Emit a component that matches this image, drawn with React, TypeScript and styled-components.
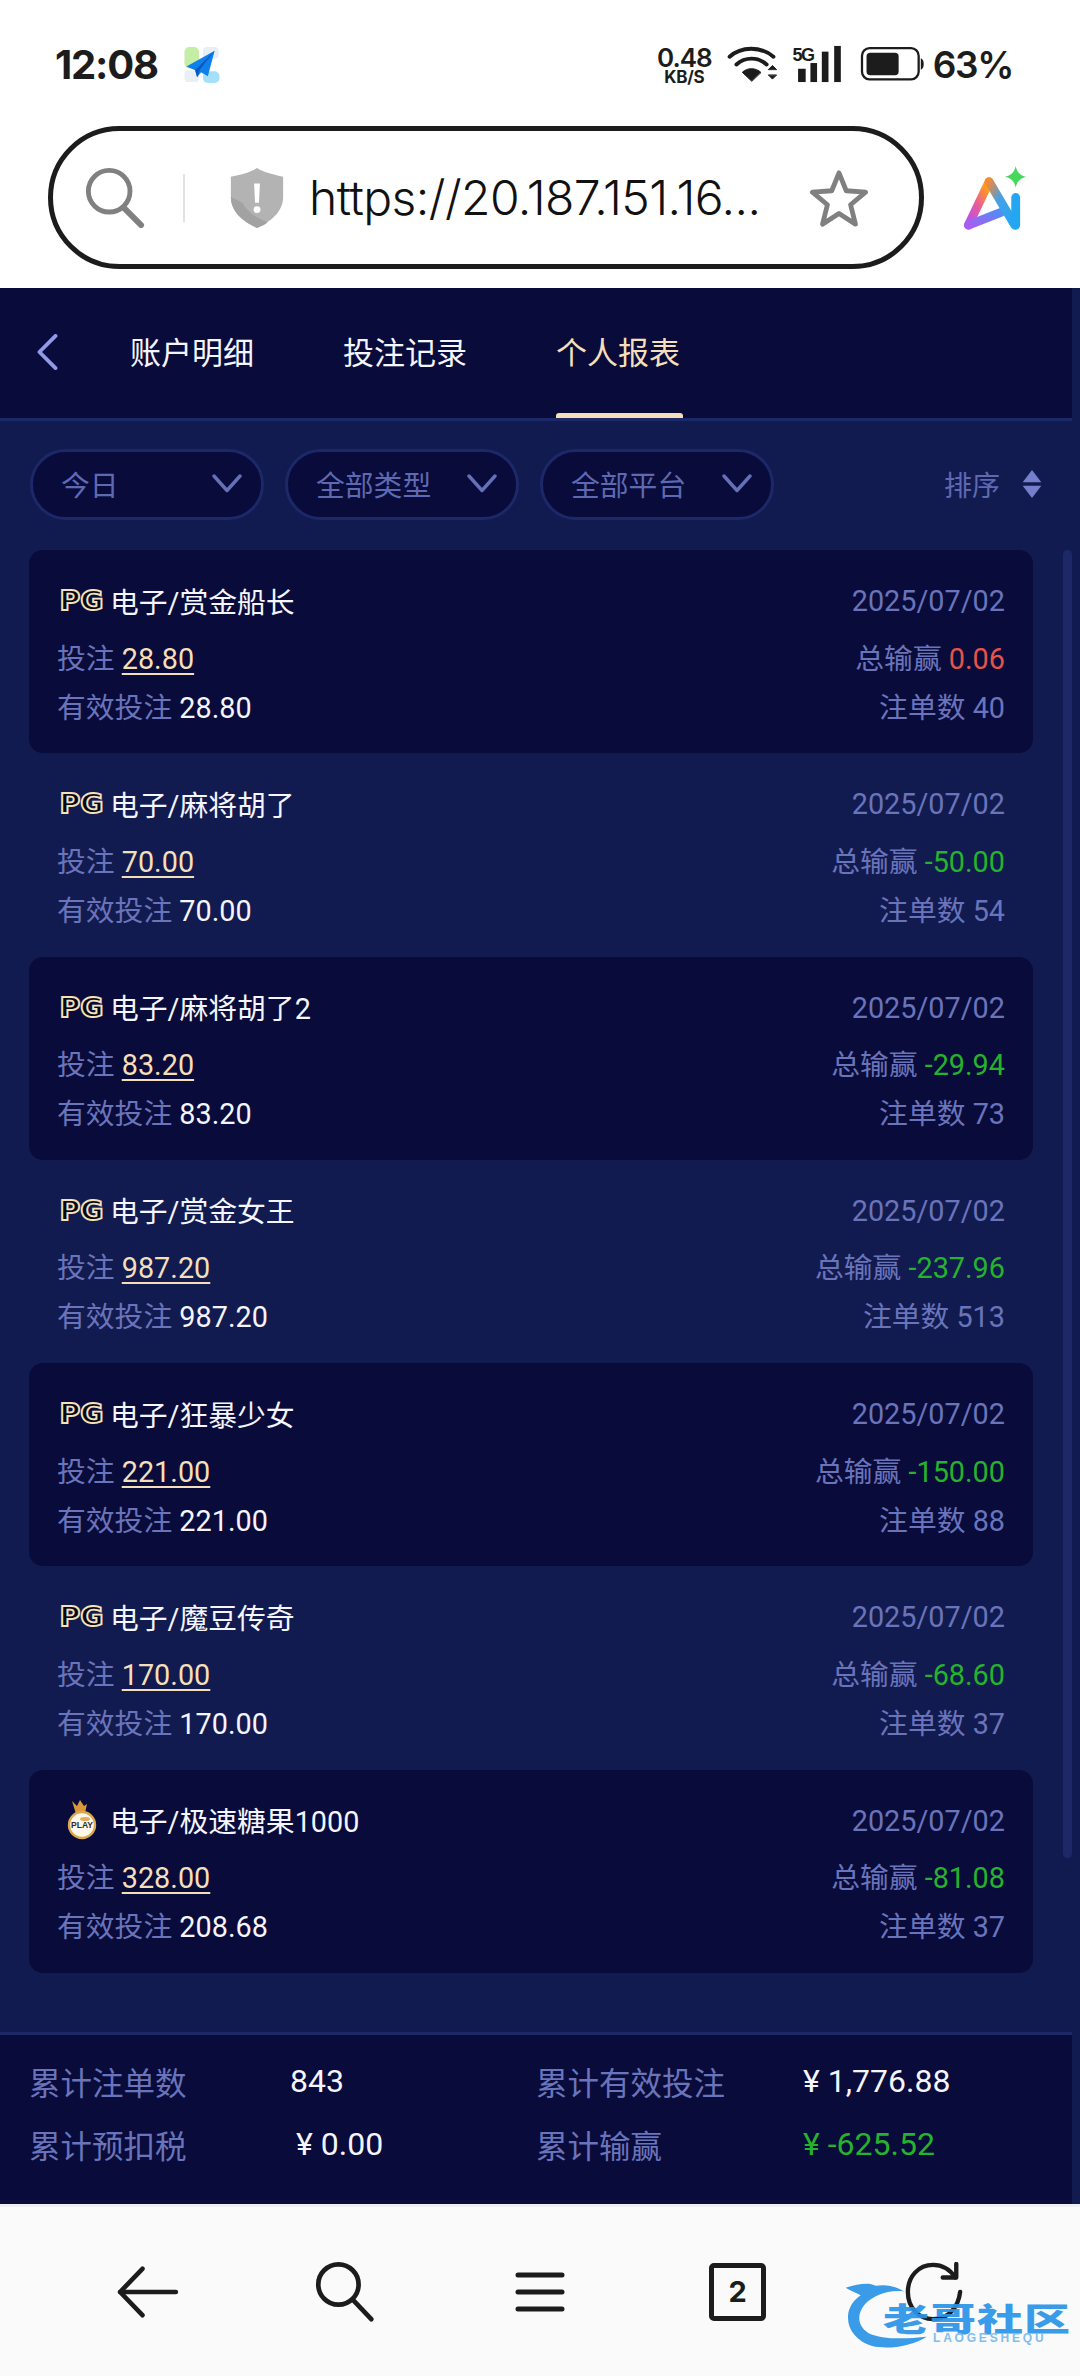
import styled, { createGlobalStyle } from "styled-components";

const GlobalStyle = createGlobalStyle`
  html, body {
    margin: 0;
    padding: 0;
    background: #fafafa;
  }
  * {
    box-sizing: border-box;
  }
`;

const Page = styled.div`
  width: 1080px;
  height: 2376px;
  display: flex;
  flex-direction: column;
  position: relative;
  overflow: hidden;
  background: #fff;
  font-family: Roboto, "Noto Sans CJK SC", sans-serif;
`;

const StatusBar = styled.div`
  height: 126px;
  display: flex;
  align-items: center;
  justify-content: space-between;
  padding: 2px 67px 0 55px;
  color: #1c1c1c;
  font-family: Inter, "Liberation Sans", sans-serif;
`;

const StatusLeft = styled.div`
  display: flex;
  align-items: center;
  gap: 25px;
`;

const Clock = styled.span`
  font-size: 40px;
  font-weight: 700;
  letter-spacing: -1.2px;
`;

const StatusRight = styled.div`
  display: flex;
  align-items: center;
  gap: 13px;
`;

const Speed = styled.div`
  width: 59px;
  display: flex;
  flex-direction: column;
  align-items: center;
  font-weight: 600;
  line-height: 1;
`;

const SpeedValue = styled.span`
  font-size: 26px;
  letter-spacing: -1px;
  height: 24px;
`;

const SpeedUnit = styled.span`
  font-size: 17px;
  font-weight: 700;
  letter-spacing: -0.2px;
  height: 15px;
`;

const BatteryGroup = styled.div`
  display: flex;
  align-items: center;
  gap: 7px;
`;

const Percent = styled.span`
  font-size: 37px;
  font-weight: 600;
  letter-spacing: -1.4px;
`;

const UrlRow = styled.div`
  height: 162px;
  display: flex;
  align-items: flex-start;
  padding-left: 48px;
`;

const UrlPill = styled.div`
  width: 876px;
  height: 143px;
  border: 5px solid #1c1c1c;
  border-radius: 72px;
  display: flex;
  align-items: center;
  padding: 0 49px 0 32px;
`;

const UrlDivider = styled.div`
  width: 2px;
  height: 48px;
  margin: 0 45px 0 38px;
  background: #e2e2e2;
`;

const UrlText = styled.span`
  margin-left: 25px;
  font-family: Inter, "Liberation Sans", sans-serif;
  font-size: 48px;
  font-weight: 300;
  letter-spacing: -0.55px;
  color: #111;
  white-space: nowrap;
`;

const StarSlot = styled.div`
  margin-left: auto;
  display: flex;
`;

const AiSlot = styled.div`
  margin: 40px 0 0 38px;
  display: flex;
`;

const Screen = styled.div`
  flex: 1;
  display: flex;
  flex-direction: column;
  background: #121b50;
  position: relative;
`;

const NavBar = styled.div`
  width: 1072px;
  height: 133px;
  display: flex;
  align-items: stretch;
  padding-left: 36px;
  background: #090b3a;
  border-bottom: 3px solid #1c2868;
`;

const BackSlot = styled.div`
  width: 94px;
  display: flex;
  align-items: center;
  padding-bottom: 2px;
`;

const Tabs = styled.div`
  display: flex;
  gap: 88px;
`;

const Tab = styled.div<{ $active?: boolean }>`
  position: relative;
  width: 125px;
  display: flex;
  align-items: center;
  font-size: 31px;
  white-space: nowrap;
  padding-bottom: 5px;
  color: ${p => (p.$active ? "#f5dfb8" : "#f4f5ff")};

  ${p =>
    p.$active &&
    `
    &::after {
      content: "";
      position: absolute;
      left: 0;
      bottom: 0;
      width: 127px;
      height: 5px;
      border-radius: 3px 3px 0 0;
      background: #f5dfb8;
    }
  `}
`;

const FilterBar = styled.div`
  width: 1072px;
  display: flex;
  align-items: center;
  gap: 21px;
  padding: 28px 30px 0;
`;

const Filter = styled.div`
  width: 234px;
  height: 71px;
  display: flex;
  align-items: center;
  justify-content: space-between;
  padding: 0 19px 3px 28px;
  background: #090b3a;
  border: 3px solid #1c2868;
  border-radius: 36px;
  color: #5f69b2;
  font-size: 28.8px;
`;

const Sort = styled.div`
  margin-left: auto;
  display: flex;
  align-items: center;
  gap: 22px;
  color: #5f69b2;
  font-size: 28px;
  padding-bottom: 1px;
`;

const ScrollThumb = styled.div`
  position: absolute;
  top: 262px;
  right: 8px;
  width: 9px;
  height: 1308px;
  border-radius: 5px;
  background: #1c2868;
`;

const List = styled.div`
  display: grid;
  grid-auto-rows: 203.3px;
  width: 1004px;
  margin: 30px 0 0 29px;
`;

const Card = styled.div<{ $dark: boolean }>`
  display: flex;
  flex-direction: column;
  padding: 30px 28px 0 28px;
  border-radius: 14px;
  background: ${p => (p.$dark ? "#090b3a" : "transparent")};
  font-size: 28.8px;
`;

const CardRow = styled.div<{ $gap?: number }>`
  height: 40px;
  margin-top: ${p => p.$gap ?? 0}px;
  display: flex;
  align-items: center;
  justify-content: space-between;
  white-space: nowrap;
`;

const Title = styled.div`
  display: flex;
  align-items: center;
  color: #f4f5ff;
`;

const LogoSlot = styled.div`
  width: 53px;
  display: flex;
  justify-content: center;
  padding-right: 4px;
`;

const Label = styled.span`
  color: #6a74ba;
`;

const DateText = styled.span`
  padding-top: 2px;
  color: #6a74ba;
`;

const Value = styled.span<{ $tone?: "white" | "gold" | "green" | "red" | "muted" }>`
  color: ${p =>
    ({ white: "#f4f5ff", gold: "#f5dfb8", green: "#25b32c", red: "#e5534b", muted: "#6a74ba" })[p.$tone ?? "white"]};
  ${p =>
    p.$tone === "gold" &&
    "text-decoration: underline; text-decoration-thickness: 2px; text-underline-offset: 4px;"}
`;

const Footer = styled.div`
  width: 1072px;
  height: 172px;
  margin-top: auto;
  display: grid;
  grid-template-columns: 261px 246px 267px 1fr;
  grid-auto-rows: 63px;
  align-items: center;
  align-content: start;
  padding: 14px 0 0 29px;
  background: #090b3a;
  border-top: 3px solid #1c2868;
  font-size: 32px;
`;

const FooterLabel = styled.span`
  font-size: 31.5px;
  color: #6a74ba;
  white-space: nowrap;
`;

const FooterValue = styled.span<{ $green?: boolean; $inset?: number }>`
  color: ${p => (p.$green ? "#25b32c" : "#f4f5ff")};
  padding-left: ${p => p.$inset ?? 0}px;
  white-space: nowrap;
`;

const Toolbar = styled.div`
  height: 172px;
  display: grid;
  grid-template-columns: repeat(5, 196.5px);
  align-items: center;
  justify-items: center;
  padding-left: 50px;
  background: #fafafa;
  border-top: 3px solid #eeeef6;
  position: relative;
`;

const TabCount = styled.div`
  width: 57px;
  height: 58px;
  display: flex;
  align-items: center;
  justify-content: center;
  border: 5px solid #1c1c1c;
  border-radius: 5px;
  color: #1c1c1c;
  font-size: 29px;
  font-weight: 700;
  font-family: Inter, "Liberation Sans", sans-serif;
`;

const Watermark = styled.div`
  position: absolute;
  right: 17px;
  bottom: 28px;
  width: 220px;
  height: 66px;
  opacity: 0.92;
`;

const WatermarkName = styled.span`
  position: absolute;
  left: 40px;
  top: 15px;
  font-family: "Noto Sans CJK SC", sans-serif;
  font-size: 46px;
  font-weight: 900;
  line-height: 40px;
  letter-spacing: 1px;
  color: #2a94e8;
  white-space: nowrap;
  transform: scaleY(0.7);
`;

const WatermarkLatin = styled.span`
  position: absolute;
  left: 90px;
  top: 49px;
  font-family: "Liberation Sans", sans-serif;
  font-size: 12px;
  line-height: 14px;
  letter-spacing: 2.8px;
  font-weight: 700;
  color: #77b9ee;
  white-space: nowrap;
`;

const PgLogo = () => (
  <svg width="47" height="38" viewBox="0 0 47 38">
    <text
      x="23.5"
      y="29"
      textAnchor="middle"
      textLength="44"
      lengthAdjust="spacingAndGlyphs"
      fontFamily="'DejaVu Sans', sans-serif"
      fontWeight="700"
      fontSize="27"
      fill="#07070f"
      stroke="#f5e2bd"
      strokeWidth="1.8"
    >
      PG
    </text>
  </svg>
);

const PlayLogo = () => (
  <svg width="30" height="40" viewBox="0 0 30 40">
    <path d="M5 1 L10 6 L13 0 L17 6 L20 4 L18 13 L9 14 Z" fill="#d9983a" />
    <circle cx="15" cy="25" r="13" fill="#fff8ea" stroke="#dba74f" strokeWidth="2.4" />
    <ellipse cx="18" cy="19" rx="5" ry="2" fill="#e0ad5e" />
    <text x="15" y="28" textAnchor="middle" fontFamily="'Liberation Sans', sans-serif" fontWeight="700" fontSize="8.5" fill="#2b2b2b">
      PLAY
    </text>
  </svg>
);

const Chevron = () => (
  <svg width="30" height="19" viewBox="0 0 30 19" fill="none">
    <path d="M2 2 L15 16.5 L28 2" stroke="#6670b8" strokeWidth="3.4" strokeLinecap="round" strokeLinejoin="round" />
  </svg>
);

type Row = {
  logo: "pg" | "play";
  title: string;
  bet: string;
  valid: string;
  profit: string;
  orders: number;
};

const rows: Row[] = [
  { logo: "pg", title: "电子/赏金船长", bet: "28.80", valid: "28.80", profit: "0.06", orders: 40 },
  { logo: "pg", title: "电子/麻将胡了", bet: "70.00", valid: "70.00", profit: "-50.00", orders: 54 },
  { logo: "pg", title: "电子/麻将胡了2", bet: "83.20", valid: "83.20", profit: "-29.94", orders: 73 },
  { logo: "pg", title: "电子/赏金女王", bet: "987.20", valid: "987.20", profit: "-237.96", orders: 513 },
  { logo: "pg", title: "电子/狂暴少女", bet: "221.00", valid: "221.00", profit: "-150.00", orders: 88 },
  { logo: "pg", title: "电子/魔豆传奇", bet: "170.00", valid: "170.00", profit: "-68.60", orders: 37 },
  { logo: "play", title: "电子/极速糖果1000", bet: "328.00", valid: "208.68", profit: "-81.08", orders: 37 },
];

export default function App() {
  return (
    <Page>
      <GlobalStyle />

      <StatusBar>
        <StatusLeft>
          <Clock>12:08</Clock>
          <svg width="38" height="37" viewBox="0 0 38 38">
            <rect x="1" y="1" width="15" height="22" rx="5" fill="#c4eda6" />
            <rect x="1" y="25" width="15" height="12" rx="4" fill="#e9eff4" />
            <rect x="20" y="1" width="16" height="12" rx="4" fill="#e6eff5" />
            <rect x="20" y="26" width="17" height="12" rx="5" fill="#a5e0fa" />
            <path d="M32 5 L3 21 L12 25 L14 32 L18 27 L25 31 Z" fill="#0f7fea" />
            <path d="M32 5 L12 25 L14 32 L17 24 Z" fill="#0a56c4" />
          </svg>
        </StatusLeft>
        <StatusRight>
          <Speed>
            <SpeedValue>0.48</SpeedValue>
            <SpeedUnit>KB/S</SpeedUnit>
          </Speed>
          <svg width="51" height="37" viewBox="0 0 51 38" fill="none" stroke="#1c1c1c" strokeWidth="4" strokeLinecap="round">
            <path d="M2 11 C14 0 34 0 47 11" />
            <path d="M9 19 C18 11 31 11 40 19" />
            <path d="M24.5 36 L15 27 C20 22 29 22 34 27 Z" fill="#1c1c1c" strokeWidth="1" strokeLinejoin="round" />
            <path d="M42 24 L46 20 L50 24 Z M42 30 L46 34 L50 30 Z" fill="#1c1c1c" strokeWidth="1" />
          </svg>
          <svg width="55" height="38" viewBox="0 0 55 40">
            <text x="0" y="17" fontFamily="'Liberation Sans Narrow', 'Liberation Sans', sans-serif" fontWeight="700" fontSize="19" letterSpacing="-1.5" fill="#1c1c1c">
              5G
            </text>
            <rect x="6" y="25" width="8" height="14" fill="#1c1c1c" />
            <rect x="19" y="19" width="7" height="20" fill="#1c1c1c" />
            <rect x="31" y="7" width="7" height="32" fill="#1c1c1c" />
            <rect x="44" y="1" width="7" height="38" fill="#1c1c1c" />
          </svg>
          <BatteryGroup>
            <svg width="67" height="34" viewBox="0 0 67 36">
              <rect x="1.2" y="1.2" width="60" height="33" rx="8" fill="none" stroke="#1c1c1c" strokeWidth="2.4" />
              <rect x="6" y="6" width="34" height="24" rx="4" fill="#1c1c1c" />
              <path d="M63.5 12 C66 13 66.5 15 66.5 18 C66.5 21 66 23 63.5 24 Z" fill="#1c1c1c" />
            </svg>
            <Percent>63%</Percent>
          </BatteryGroup>
        </StatusRight>
      </StatusBar>

      <UrlRow>
        <UrlPill>
          <svg width="60" height="60" viewBox="0 0 60 62" fill="none" stroke="#808080" strokeWidth="5" strokeLinecap="round">
            <circle cx="24" cy="24" r="21.5" />
            <path d="M39 41 L57 59" strokeWidth="6" />
          </svg>
          <UrlDivider />
          <svg width="54" height="60" viewBox="0 0 54 62">
            <path d="M27 0 C33 4 44 7 54 9 L54 30 C54 46 40 56 27 62 C14 56 0 46 0 30 L0 9 C10 7 21 4 27 0 Z" fill="#b3b3b3" />
            <path d="M0 30 C0 46 14 56 27 62 C32 60 36 58 38 56 C26 52 16 44 12 36 Z" fill="#a2a2a2" />
            <path d="M24 16 L30 16 L29 36 L25 36 Z" fill="#fff" />
            <circle cx="27" cy="43" r="3.6" fill="#fff" />
          </svg>
          <UrlText>https://20.187.151.16...</UrlText>
          <StarSlot>
            <svg width="62" height="58" viewBox="0 0 62 60" fill="none">
              <path
                d="M31 4 L38.5 22.5 L58.5 24 L43 37 L48 57 L31 46 L14 57 L19 37 L3.5 24 L23.5 22.5 Z"
                stroke="#808080"
                strokeWidth="5"
                strokeLinejoin="round"
              />
            </svg>
          </StarSlot>
        </UrlPill>
        <AiSlot>
          <svg width="68" height="65" viewBox="1 0 64 66" fill="none">
            <defs>
              <linearGradient id="aiLeft" x1="0" y1="1" x2="0.6" y2="0">
                <stop offset="0" stopColor="#b74df0" />
                <stop offset="0.55" stopColor="#e85c9a" />
                <stop offset="1" stopColor="#ff9a1f" />
              </linearGradient>
              <linearGradient id="aiCross" x1="0" y1="1" x2="1" y2="0">
                <stop offset="0" stopColor="#a95cf2" />
                <stop offset="1" stopColor="#4f8df5" />
              </linearGradient>
              <linearGradient id="aiRight" x1="0" y1="0" x2="1" y2="1">
                <stop offset="0" stopColor="#f08a3a" />
                <stop offset="0.4" stopColor="#46a0e8" />
                <stop offset="1" stopColor="#1fa8f5" />
              </linearGradient>
            </defs>
            <path d="M5 60 L26 16" stroke="url(#aiLeft)" strokeWidth="9" strokeLinecap="round" />
            <path d="M5 60 L38 47" stroke="url(#aiCross)" strokeWidth="9" strokeLinecap="round" />
            <path d="M26 16 L52 60" stroke="url(#aiRight)" strokeWidth="9" strokeLinecap="round" />
            <path d="M53 32 L53 60" stroke="#24a6f2" strokeWidth="9" strokeLinecap="round" />
            <path d="M53 0 C54 6 58 10 64 11 C58 12 54 16 53 22 C52 16 48 12 42 11 C48 10 52 6 53 0 Z" fill="#46d85c" />
          </svg>
        </AiSlot>
      </UrlRow>

      <Screen>
        <NavBar>
          <BackSlot>
            <svg width="22" height="36" viewBox="0 0 22 38" fill="none">
              <path d="M20 2 L3 19 L20 36" stroke="#8f9bea" strokeWidth="4" strokeLinecap="round" strokeLinejoin="round" />
            </svg>
          </BackSlot>
          <Tabs>
            <Tab>账户明细</Tab>
            <Tab>投注记录</Tab>
            <Tab $active>个人报表</Tab>
          </Tabs>
        </NavBar>

        <FilterBar>
          <Filter>
            今日
            <Chevron />
          </Filter>
          <Filter>
            全部类型
            <Chevron />
          </Filter>
          <Filter>
            全部平台
            <Chevron />
          </Filter>
          <Sort>
            排序
            <svg width="20" height="28" viewBox="0 0 20 30">
              <path d="M10 0 L20 13 L0 13 Z M0 17 L20 17 L10 30 Z" fill="#7480cc" />
            </svg>
          </Sort>
        </FilterBar>

        <List>
          {rows.map((row, i) => (
            <Card key={row.title} $dark={i % 2 === 0}>
              <CardRow>
                <Title>
                  <LogoSlot>{row.logo === "pg" ? <PgLogo /> : <PlayLogo />}</LogoSlot>
                  {row.title}
                </Title>
                <DateText>2025/07/02</DateText>
              </CardRow>
              <CardRow $gap={16}>
                <span>
                  <Label>投注 </Label>
                  <Value $tone="gold">{row.bet}</Value>
                </span>
                <span>
                  <Label>总输赢 </Label>
                  <Value $tone={row.profit.startsWith("-") ? "green" : "red"}>{row.profit}</Value>
                </span>
              </CardRow>
              <CardRow $gap={9}>
                <span>
                  <Label>有效投注 </Label>
                  <Value>{row.valid}</Value>
                </span>
                <span>
                  <Label>注单数 </Label>
                  <Value $tone="muted">{row.orders}</Value>
                </span>
              </CardRow>
            </Card>
          ))}
        </List>

        <ScrollThumb />

        <Footer>
          <FooterLabel>累计注单数</FooterLabel>
          <FooterValue>843</FooterValue>
          <FooterLabel>累计有效投注</FooterLabel>
          <FooterValue>¥ 1,776.88</FooterValue>
          <FooterLabel>累计预扣税</FooterLabel>
          <FooterValue $inset={6}>¥ 0.00</FooterValue>
          <FooterLabel>累计输赢</FooterLabel>
          <FooterValue $green>¥ -625.52</FooterValue>
        </Footer>
      </Screen>

      <Toolbar>
        <svg width="66" height="52" viewBox="0 0 66 56" fill="none" stroke="#1c1c1c" strokeWidth="5" strokeLinecap="round" strokeLinejoin="round">
          <path d="M27 3 L3 28 L27 53" />
          <path d="M3 28 L63 28" />
        </svg>
        <svg width="62" height="60" viewBox="0 0 62 64" fill="none" stroke="#1c1c1c" strokeWidth="5" strokeLinecap="round">
          <circle cx="24" cy="24" r="21.5" />
          <path d="M40 41 L59 61" />
        </svg>
        <svg width="52" height="40" viewBox="0 0 52 40" fill="none" stroke="#1c1c1c" strokeWidth="5" strokeLinecap="round">
          <path d="M3 3 L47 3 M3 20 L47 20 M3 37 L47 37" />
        </svg>
        <TabCount>2</TabCount>
        <svg width="60" height="60" viewBox="0 0 60 62" fill="none" stroke="#1c1c1c" strokeWidth="4.5" strokeLinecap="round" strokeLinejoin="round">
          <path d="M52 16 C46 7 38 3 29 3 C14 3 3 15 3 31 C3 47 14 59 29 59 C44 59 55 48 57 31" />
          <path d="M53 2 L53 16 L39 16" />
        </svg>
        <Watermark>
          <svg width="92" height="66" viewBox="0 0 92 70">
            <path
              d="M0 6 C14 2 24 0 32 4 C44 2 54 5 62 10 C44 8 30 14 20 24 C12 34 12 46 24 54 C40 62 66 60 86 58 C70 68 46 72 28 68 C10 62 0 48 3 32 C5 24 10 18 16 14 C10 11 5 9 0 6 Z"
              fill="#2a94e8"
            />
          </svg>
          <WatermarkName>老哥社区</WatermarkName>
          <WatermarkLatin>LAOGESHEQU</WatermarkLatin>
        </Watermark>
      </Toolbar>
    </Page>
  );
}
